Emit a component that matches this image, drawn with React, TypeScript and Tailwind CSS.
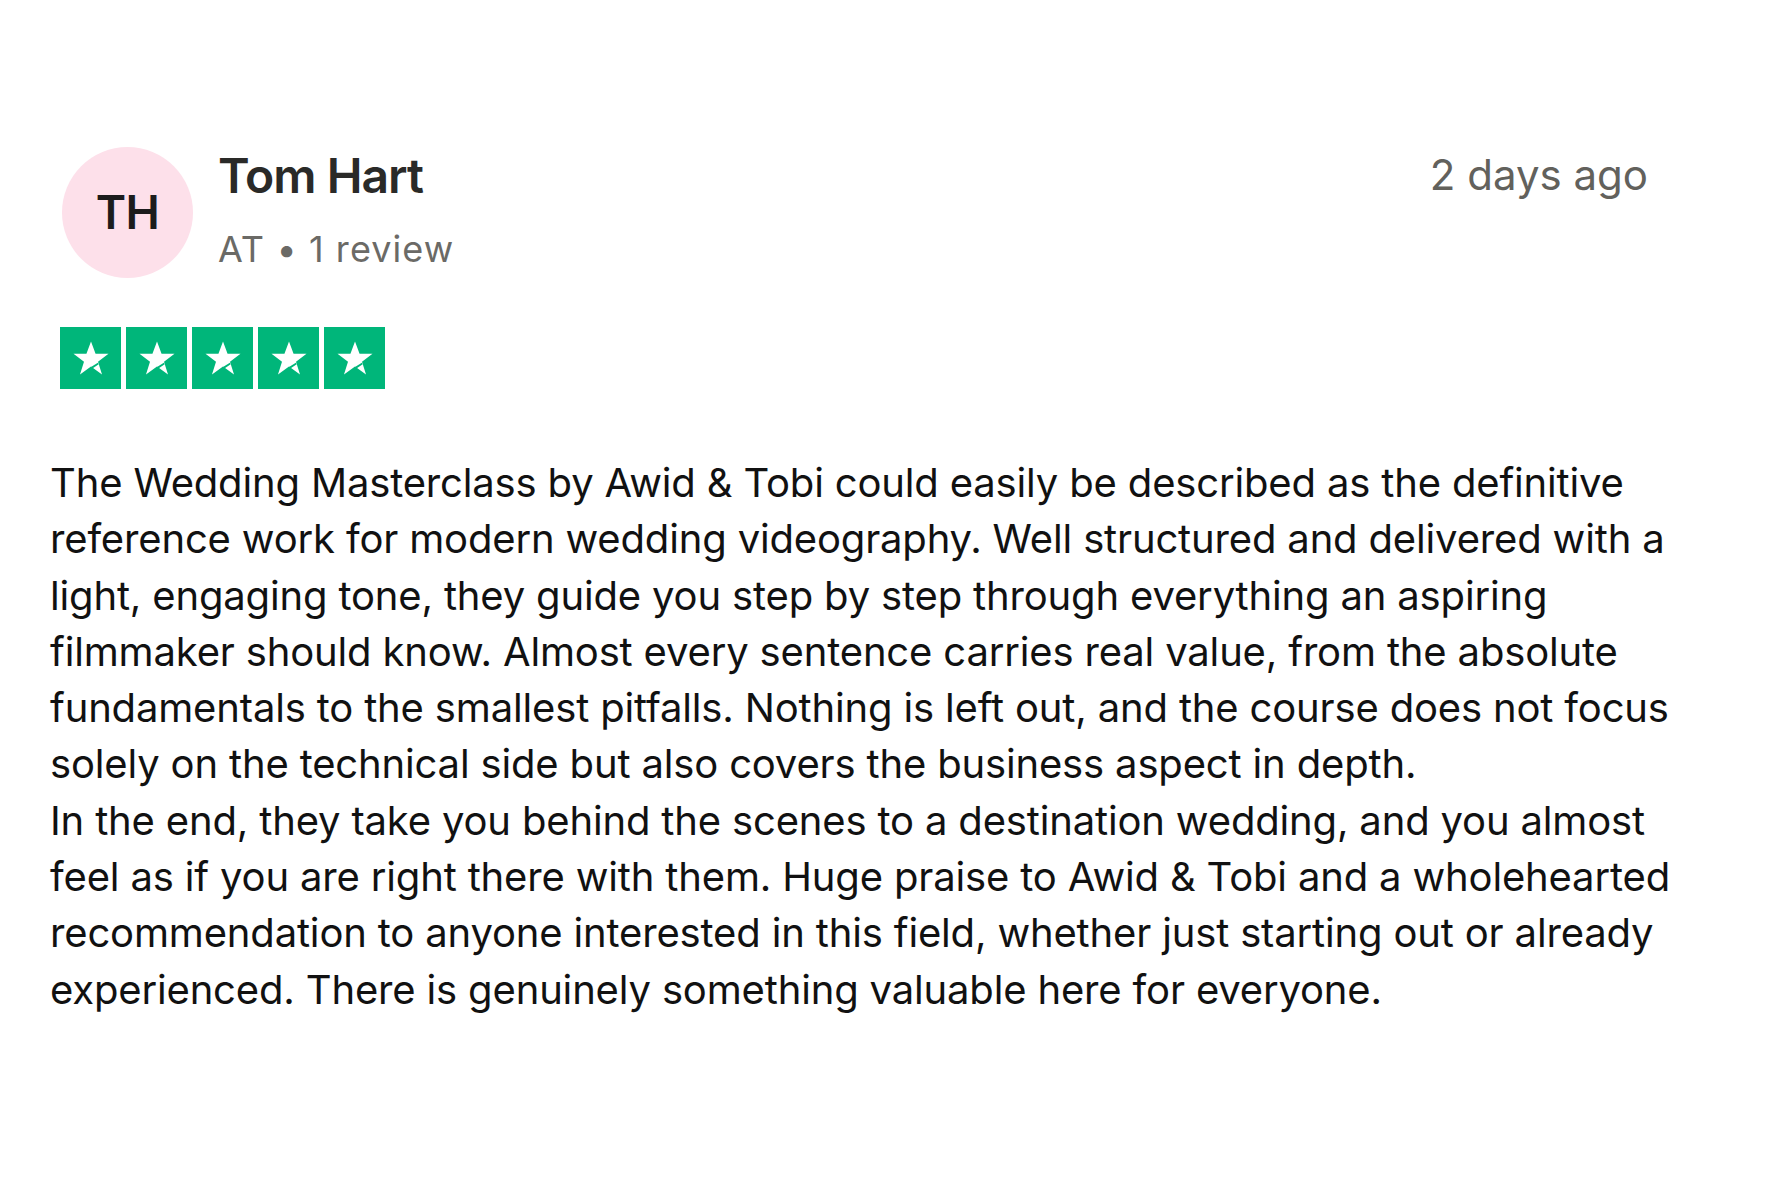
import React from "react"

const lines = [
    "The Wedding Masterclass by Awid & Tobi could easily be described as the definitive",
    "reference work for modern wedding videography. Well structured and delivered with a",
    "light, engaging tone, they guide you step by step through everything an aspiring",
    "filmmaker should know. Almost every sentence carries real value, from the absolute",
    "fundamentals to the smallest pitfalls. Nothing is left out, and the course does not focus",
    "solely on the technical side but also covers the business aspect in depth.",
    "In the end, they take you behind the scenes to a destination wedding, and you almost",
    "feel as if you are right there with them. Huge praise to Awid & Tobi and a wholehearted",
    "recommendation to anyone interested in this field, whether just starting out or already",
    "experienced. There is genuinely something valuable here for everyone.",
]

function Star() {
    return (
        <div className="w-[61px] h-[62px] bg-[#00b67a] flex items-center justify-center">
            <svg viewBox="0 0 24 24" className="w-[42px] h-[42px]">
                <polygon fill="#fff" points="12,2.5 14.6,9.6 22,9.6 16,14.1 18.3,21.4 12,16.9 5.7,21.4 8,14.1 2,9.6 9.4,9.6" />
                <polygon fill="#00b67a" points="12,17.2 15.9,14.7 16.4,15.6 12.6,18.2" />
            </svg>
        </div>
    )
}

export default function App() {
    return (
        <div className="w-[1766px] h-[1177px] bg-white font-['Inter',sans-serif] overflow-hidden">
            <div className="pt-[147px] pl-[50px] pr-[118px]">
                <div className="flex items-start justify-between pl-[12px]">
                    <div className="flex items-start gap-[25px]">
                        <div className="w-[131px] h-[131px] rounded-full bg-[#fde0ea] flex items-center justify-center">
                            <span className="text-[46px] font-semibold text-[#1c1c1c] tracking-[-0.01em]">TH</span>
                        </div>
                        <div className="flex flex-col pt-[1px]">
                            <p className="text-[48px] leading-[56px] font-semibold text-[#2a2a28] tracking-[-0.02em]">Tom Hart</p>
                            <p className="mt-[25px] text-[36px] leading-[40px] text-[#6b6a66] tracking-[0.03em]">AT • 1 review</p>
                        </div>
                    </div>
                    <p className="mt-[4px] text-[42px] leading-[48px] text-[#62615c]">2 days ago</p>
                </div>

                <div className="flex gap-[5px] mt-[49px] pl-[10px]">
                    <Star />
                    <Star />
                    <Star />
                    <Star />
                    <Star />
                </div>

                <div className="mt-[66px] text-[40px] leading-[56.3px] text-[#111] tracking-[-0.16px]">
                    {lines.map((line, i) => (
                        <p key={i} className="whitespace-nowrap">{line}</p>
                    ))}
                </div>
            </div>
        </div>
    )
}
